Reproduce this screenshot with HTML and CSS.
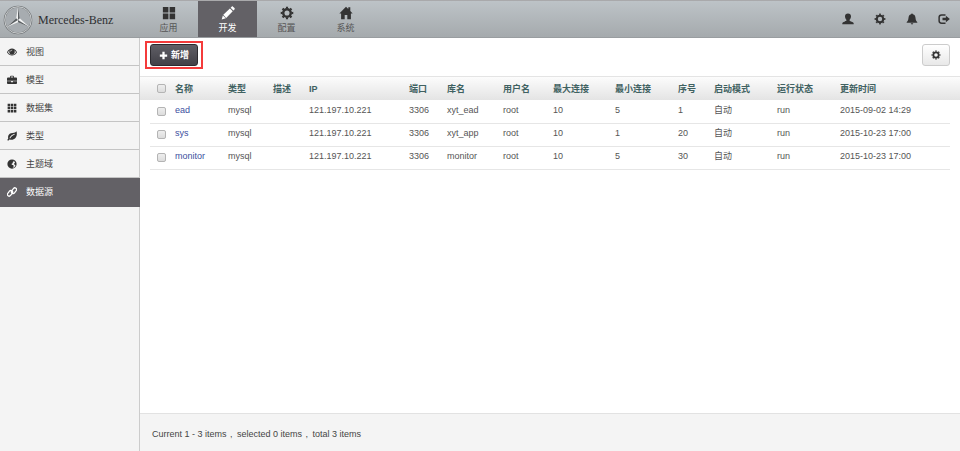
FILE: index.html
```html
<!DOCTYPE html>
<html lang="zh-CN">
<head>
<meta charset="utf-8">
<title>数据源</title>
<link rel="stylesheet" href="styles.css">
</head>
<body>
<svg class="sprite" aria-hidden="true">
  <symbol id="cog" viewBox="0 0 16 16"><circle cx="8" cy="8" r="4.300" fill="none" stroke="currentColor" stroke-width="2.800"/><circle cx="8" cy="8" r="6.200" fill="none" stroke="currentColor" stroke-width="2" pathLength="16" stroke-dasharray="1 1" stroke-dashoffset=".5"/></symbol>
  <symbol id="apps" viewBox="0 0 16 16"><path d="M1 1h6.300v6.300H1zM8.700 1H15v6.300H8.700zM1 8.700h6.300V15H1zM8.700 8.700H15V15H8.700z"/></symbol>
  <symbol id="pencil" viewBox="0 0 16 16"><path d="M.8 15.400l1.300-4.600 3.400 3.300zM2.600 10L10.200 2.800l3.200 3.100-7.500 7.700zM11 2l1.200-1.200c.5-.5 1-.5 1.500 0l1.700 1.600c.5.500.5 1 0 1.500l-1.200 1.300z"/></symbol>
  <symbol id="home" viewBox="0 0 16 16"><path d="M8 .8L.4 8.500h2V15h4.100v-4.800h3V15h4.100V8.500h2l-2.700-2.800V1.500h-2.300v1.900z"/></symbol>
  <symbol id="user" viewBox="0 0 16 16"><path d="M8 .5c2.600 0 4 1.500 4 3.900 0 2-.8 3.600-1.800 4.600v1.200c0 .6 5 1.500 5.300 3.100.1.600.1 1.200.1 1.700H.4c0-.5 0-1.100.1-1.700.3-1.600 5.300-2.500 5.300-3.100V9C4.800 8 4 6.400 4 4.400 4 2 5.400.5 8 .5z"/></symbol>
  <symbol id="bell" viewBox="0 0 16 16"><path d="M8 .5c.8 0 1.200.6 1.200 1.300 2.400.6 3.300 2.500 3.500 5 .2 2.700.9 4 2.400 5.400v.8H.9v-.8c1.500-1.400 2.200-2.700 2.400-5.400.2-2.500 1.100-4.400 3.500-5C6.800 1.100 7.200.5 8 .5zM6.300 13.800h3.400c-.2 1-.8 1.600-1.700 1.600s-1.500-.6-1.700-1.600z"/></symbol>
  <symbol id="exit" viewBox="0 0 16 16"><path d="M10 2.500H4.800C2.800 2.500 1.500 3.700 1.500 5.700v4.600c0 2 1.300 3.200 3.300 3.200H10" fill="none" stroke="currentColor" stroke-width="2"/><path d="M10.500 3.800L15.800 8l-5.300 4.200V9.700H6V6.300h4.500z"/></symbol>
  <symbol id="eye" viewBox="0 0 16 16"><path fill-rule="evenodd" d="M0 8.200C2 4.400 4.800 2.500 8 2.500s6 1.900 8 5.700c-2 3.600-4.800 5.300-8 5.300S2 11.800 0 8.200zm1.600 0C3.300 11 5.500 12.200 8 12.200s4.700-1.200 6.400-4c-.8-1.300-1.700-2.300-2.800-3 .6.700.8 1.500.8 2.300a4.400 4.400 0 1 1-8.800 0c0-.8.200-1.600.8-2.300-1.100.7-2 1.700-2.800 3zM6 7.300c.5 0 .5-.4.600-.8.200-.7.600-1 1.300-1.200.8-.2.700-1 0-1C6.400 4.300 5.300 5.500 5.300 6.800c0 .3.300.5.7.5z"/></symbol>
  <symbol id="briefcase" viewBox="0 0 16 16"><path fill-rule="evenodd" d="M5 4V2.200C5 1.500 5.500 1 6.200 1h3.600c.7 0 1.200.5 1.200 1.200V4h3.500c.8 0 1.500.6 1.500 1.400V9H0V5.400C0 4.600.7 4 1.500 4zm1.500 0h3V2.400h-3zM0 10h6.500v1.500h3V10H16v3.200c0 .8-.7 1.300-1.500 1.300h-13C.7 14.500 0 14 0 13.200z"/></symbol>
  <symbol id="grid" viewBox="0 0 16 16"><path d="M1 1h4v4H1zM6 1h4v4H6zM11 1h4v4h-4zM1 6h4v4H1zM6 6h4v4H6zM11 6h4v4h-4zM1 11h4v4H1zM6 11h4v4H6zM11 11h4v4h-4z"/></symbol>
  <symbol id="leaf" viewBox="0 0 16 16"><path fill-rule="evenodd" d="M15.300.3c.9 4.200.6 8-1.800 10.900-2.300 2.700-5.600 3.200-9.400 2.500-.8.400-1.500 1.400-2.100 2L.3 14.500c.6-.9 1.500-1.600 1.700-2.600C1 7.800 2.700 4.600 6.400 3.500 9.700 2.600 13.200 3 15.300.3zM12 4.500C8.500 5.600 5.600 8 4 11.200l.9.600C6.700 9 9.200 6.700 12.400 5.500z"/></symbol>
  <symbol id="globe" viewBox="0 0 16 16"><path fill-rule="evenodd" d="M8 .6a7.400 7.400 0 1 1 0 14.800A7.400 7.400 0 0 1 8 .6zM7 2l3.400.5.500 1.100-1.800 1.200.3 1.500-2.300 1.600.8 1.300 2.400.8.400 1.700-1.600 2.600 3-1.500 1.600-2.700-1.500-.6-.9-2.200 1.600-1.400-1.100-1.900C10.400 2.400 8.700 1.700 7 2z"/></symbol>
  <symbol id="link" viewBox="0 0 16 16"><g fill="none" stroke="currentColor" stroke-width="2" transform="rotate(-52 8 8)"><rect x="-.6" y="4" width="10" height="5.600" rx="2.800"/><rect x="6.600" y="6.400" width="10" height="5.600" rx="2.800"/></g></symbol>
  <symbol id="plus" viewBox="0 0 16 16"><path d="M6 1.500h4V6h4.500v4H10v4.500H6V10H1.500V6H6z"/></symbol>
</svg>

<header class="topbar">
  <a class="brand" href="#">
    <svg class="star" viewBox="0 0 30 30" aria-hidden="true">
      <circle cx="15" cy="15" r="13.400" fill="#a7acb0" stroke="#6f7376" stroke-width="1.800"/>
      <circle cx="15" cy="15" r="13.300" fill="none" stroke="#e2e4e5" stroke-width=".8"/>
      <path d="M15 2l1.800 11.200L26.200 22 15 17.200 3.800 22l9.400-8.800z" fill="#f2f3f3"/>
      <path d="M15 2l1.800 11.200L15 15zM26.200 22L15 17.200V15zM3.800 22l9.400-8.800L15 15z" fill="#5c6063"/>
    </svg>
    <span>Mercedes-Benz</span>
  </a>
  <nav class="tabs">
    <a href="#"><svg><use href="#apps"/></svg>应用</a>
    <a href="#" class="active"><svg><use href="#pencil"/></svg>开发</a>
    <a href="#"><svg><use href="#cog"/></svg>配置</a>
    <a href="#"><svg><use href="#home"/></svg>系统</a>
  </nav>
  <div class="tools">
    <button type="button" aria-label="用户"><svg><use href="#user"/></svg></button>
    <button type="button" aria-label="设置"><svg><use href="#cog"/></svg></button>
    <button type="button" aria-label="通知"><svg><use href="#bell"/></svg></button>
    <button type="button" aria-label="退出"><svg><use href="#exit"/></svg></button>
  </div>
</header>

<div class="body">
  <nav class="sidebar">
    <a href="#"><svg><use href="#eye"/></svg>视图</a>
    <a href="#"><svg><use href="#briefcase"/></svg>模型</a>
    <a href="#"><svg><use href="#grid"/></svg>数据集</a>
    <a href="#"><svg><use href="#leaf"/></svg>类型</a>
    <a href="#"><svg><use href="#globe"/></svg>主题域</a>
    <a href="#" class="active"><svg><use href="#link"/></svg>数据源</a>
  </nav>

  <main>
    <div class="actions">
      <div class="highlight"><button type="button" class="add"><svg><use href="#plus"/></svg>新增</button></div>
      <button type="button" class="config" aria-label="列设置"><svg><use href="#cog"/></svg></button>
    </div>
    <div class="list">
      <table>
        <colgroup>
          <col class="w-check"><col class="w-name"><col class="w-type"><col class="w-desc"><col class="w-ip"><col class="w-port"><col class="w-db"><col class="w-user"><col class="w-max"><col class="w-min"><col class="w-seq"><col class="w-mode"><col class="w-state"><col class="w-time">
        </colgroup>
        <thead>
          <tr><th><input type="checkbox" aria-label="全选"></th><th>名称</th><th>类型</th><th>描述</th><th>IP</th><th>端口</th><th>库名</th><th>用户名</th><th>最大连接</th><th>最小连接</th><th>序号</th><th>启动模式</th><th>运行状态</th><th>更新时间</th></tr>
        </thead>
        <tbody>
          <tr><td><input type="checkbox" aria-label="ead"></td><td><a href="#">ead</a></td><td>mysql</td><td></td><td>121.197.10.221</td><td>3306</td><td>xyt_ead</td><td>root</td><td>10</td><td>5</td><td>1</td><td>自动</td><td>run</td><td>2015-09-02 14:29</td></tr>
          <tr><td><input type="checkbox" aria-label="sys"></td><td><a href="#">sys</a></td><td>mysql</td><td></td><td>121.197.10.221</td><td>3306</td><td>xyt_app</td><td>root</td><td>10</td><td>1</td><td>20</td><td>自动</td><td>run</td><td>2015-10-23 17:00</td></tr>
          <tr><td><input type="checkbox" aria-label="monitor"></td><td><a href="#">monitor</a></td><td>mysql</td><td></td><td>121.197.10.221</td><td>3306</td><td>monitor</td><td>root</td><td>10</td><td>5</td><td>30</td><td>自动</td><td>run</td><td>2015-10-23 17:00</td></tr>
        </tbody>
      </table>
    </div>
    <footer>Current 1 - 3 items <span>,</span> selected 0 items <span>,</span> total 3 items</footer>
  </main>
</div>
</body>
</html>
```
FILE: styles.css
```css
* { box-sizing: border-box; }

body {
  margin: 0;
  min-height: 100vh;
  display: flex;
  flex-direction: column;
  font: 9px/12px "Liberation Sans", "Noto Sans CJK SC", sans-serif;
  color: #555;
  background: #fff;
}

a { color: inherit; text-decoration: none; }
button { font: inherit; color: inherit; cursor: pointer; }
svg { display: block; width: 10px; height: 10px; fill: currentColor; }
.sprite { display: none; }

.topbar {
  display: flex;
  height: 38px;
  border-top: 1px solid #a9a9ab;
  border-bottom: 1px solid #999da0;
  background: linear-gradient(#bdc3c7, #a5aaad);
}

.brand {
  display: flex;
  align-items: center;
  gap: 5px;
  width: 139px;
  padding: 2px 0 0 3px;
  font: 12px/16px "Liberation Serif", serif;
  color: #2e3033;
}
.brand .star { width: 30px; height: 30px; }

.tabs { display: flex; }
.tabs a {
  display: flex;
  flex-direction: column;
  align-items: center;
  gap: 2px;
  width: 59px;
  padding-top: 5px;
  color: #555;
}
.tabs svg { width: 14px; height: 14px; color: #333; }
.tabs .active { background: #636166; color: #fff; }
.tabs .active svg { color: #fff; }

.tools { display: flex; align-items: center; gap: 20px; margin-left: auto; padding-right: 10px; }
.tools button { padding: 0; border: 0; background: none; color: #333; }
.tools svg { width: 12px; height: 12px; }

.body { flex: 1; display: flex; }

.sidebar { width: 140px; background: #f4f4f4; border-right: 1px solid #ccc; }
.sidebar a {
  display: flex;
  align-items: center;
  gap: 9px;
  height: 28px;
  padding-left: 7px;
  border-bottom: 1px solid #c4c4c4;
  color: #444;
}
.sidebar svg { color: #333; }
.sidebar .active { height: 29px; margin-right: -1px; border-color: #636166; background: #636166; color: #fff; }
.sidebar .active svg { color: #fff; }

main { flex: 1; min-width: 0; display: flex; flex-direction: column; }

.actions { display: flex; align-items: center; justify-content: space-between; padding: 3px 10px 7px 5px; }
.highlight { padding: 1px 3px; border: 2px solid #f43b3b; }
.add {
  display: flex;
  align-items: center;
  gap: 3px;
  height: 22px;
  padding: 0 8px;
  border: 1px solid #2c2b30;
  border-radius: 3px;
  background: linear-gradient(#5f5e65, #414047);
  color: #fff;
  font-weight: bold;
}
.add svg { width: 9px; height: 9px; }
.config {
  padding: 5px 8px;
  border: 1px solid #ccc;
  border-radius: 3px;
  background: linear-gradient(#fff, #e8e8e8);
  color: #333;
}

.list {
  flex: 1;
  padding: 0 10px;
  border-top: 1px solid #e4e4e4;
  background: linear-gradient(#fcfcfc, #e4e4e4) top / 100% 23px no-repeat;
}
table { width: 100%; table-layout: fixed; border-collapse: collapse; }
th, td { padding: 0; text-align: left; white-space: nowrap; }
th { height: 23px; color: #3f6161; font-weight: bold; }
td { height: 23px; padding-bottom: 3px; border-bottom: 1px solid #e6e6e6; }
td a { color: #3c50a0; }

input[type="checkbox"] {
  appearance: none;
  display: block;
  width: 9px;
  height: 9px;
  margin: 0 0 0 7px;
  border: 1px solid #b4b4b4;
  border-radius: 2px;
  background: linear-gradient(#eee, #dcdcdc);
}
td:first-child { padding: 0; }

.w-check { width: 25px; }
.w-name { width: 53px; }
.w-type { width: 45px; }
.w-desc { width: 36px; }
.w-ip { width: 100px; }
.w-port { width: 38px; }
.w-db { width: 56px; }
.w-user { width: 50px; }
.w-max { width: 62px; }
.w-min { width: 63px; }
.w-seq { width: 36px; }
.w-mode { width: 63px; }
.w-state { width: 63px; }
.w-time { width: 110px; }

footer { padding: 14px 12px 11px; border-top: 1px solid #e2e2e2; background: #f4f4f4; color: #444; }
footer span { padding: 0 2px 0 1px; }
```
